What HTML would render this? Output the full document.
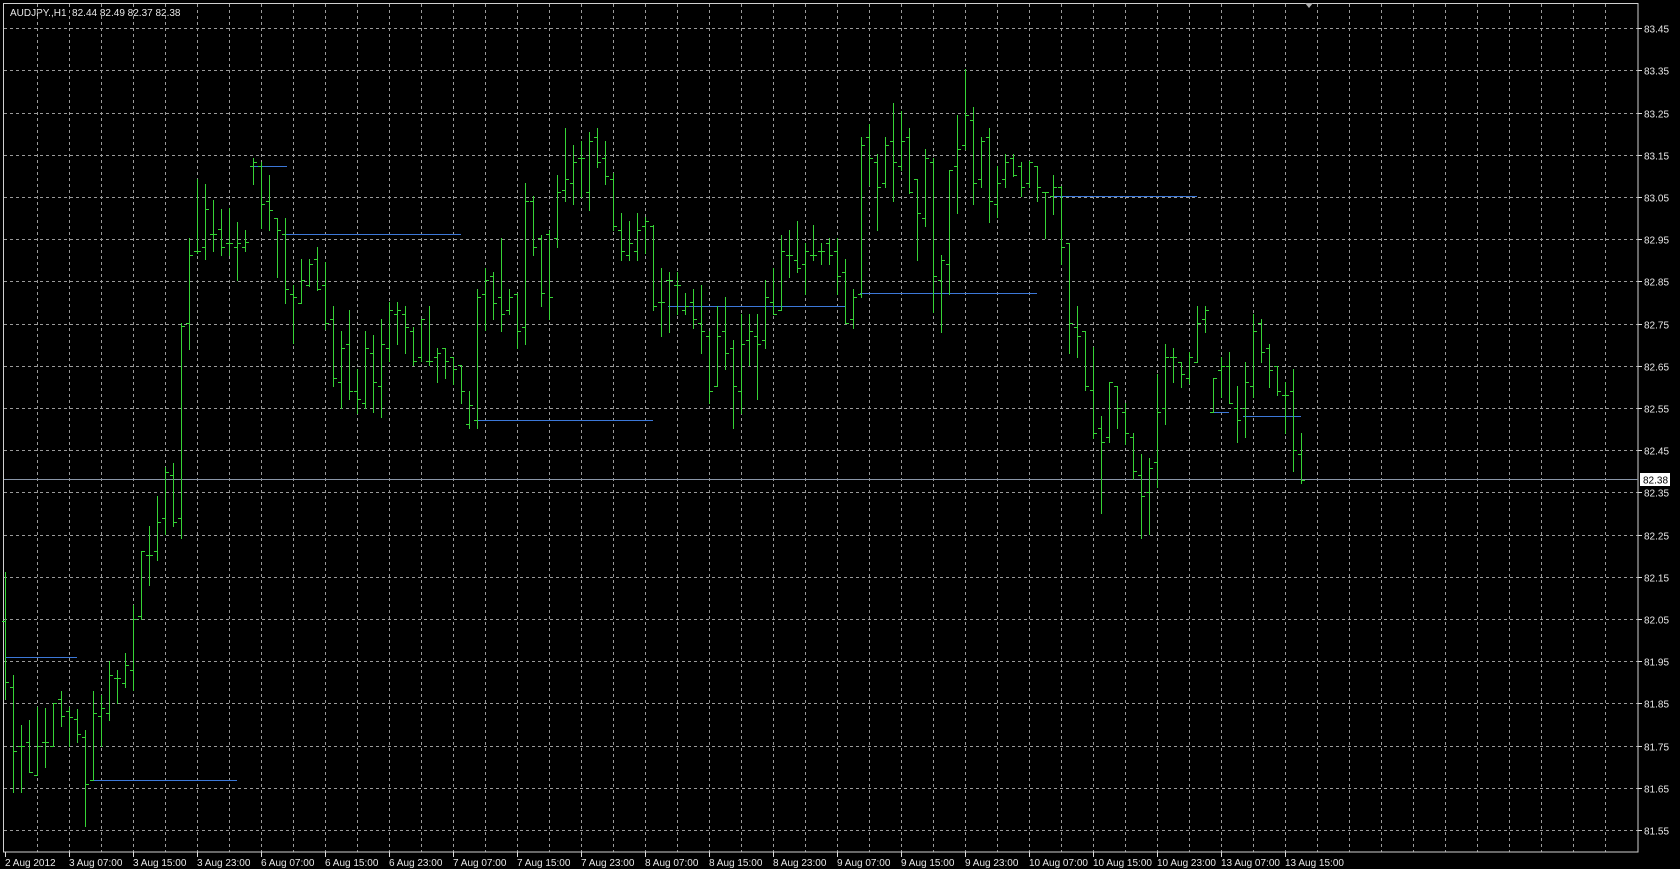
<!DOCTYPE html>
<html><head><meta charset="utf-8">
<style>
html,body{margin:0;padding:0;background:#000;width:1680px;height:869px;overflow:hidden}
svg{display:block}
text{font-family:"Liberation Sans",sans-serif;font-size:10px}
</style></head>
<body>
<svg id="c" width="1680" height="869" xmlns="http://www.w3.org/2000/svg">
<rect width="1680" height="869" fill="#000"/>
<text x="10" y="16" fill="#e8e8e8" font-size="10.5" xml:space="preserve">AUDJPY.,H1&#160;&#160;82.44 82.49 82.37 82.38</text>
</svg>
<script>
var s='';
for(var k=1;k<=50;k++){var x=5+32*k+0.5;s+='<line x1="'+x+'" y1="4" x2="'+x+'" y2="852" stroke="#9a9a9a" stroke-dasharray="3,3"/>';}
for(var k=0;k<=19;k++){var y=Math.round(492.3-42.2*(k-8))+0.5;var p=(81.55+0.1*k).toFixed(2);
 s+='<line x1="4" y1="'+y+'" x2="1638" y2="'+y+'" stroke="#9a9a9a" stroke-dasharray="3,3"/>';
 s+='<line x1="1638" y1="'+y+'" x2="1642" y2="'+y+'" stroke="#ddd"/>';
 s+='<text x="1644" y="'+(y+4)+'" fill="#e8e8e8" font-size="10.5">'+p+'</text>';}
s+='<rect x="3.5" y="3.5" width="1634.5" height="848.5" fill="none" stroke="#d0d0d0"/>';
s+='<polygon points="1305,3 1313,3 1309,8" fill="#b0b0b0"/>';
var tl=["2 Aug 2012","3 Aug 07:00","3 Aug 15:00","3 Aug 23:00","6 Aug 07:00","6 Aug 15:00","6 Aug 23:00","7 Aug 07:00","7 Aug 15:00","7 Aug 23:00","8 Aug 07:00","8 Aug 15:00","8 Aug 23:00","9 Aug 07:00","9 Aug 15:00","9 Aug 23:00","10 Aug 07:00","10 Aug 15:00","10 Aug 23:00","13 Aug 07:00","13 Aug 15:00"];
for(var i=0;i<tl.length;i++){var x=5+64*i;s+='<line x1="'+(x+0.5)+'" y1="852" x2="'+(x+0.5)+'" y2="857" stroke="#ddd"/><text x="'+(x)+'" y="866" fill="#e8e8e8">'+tl[i]+'</text>';}
s+='<line x1="4" y1="479.5" x2="1638" y2="479.5" stroke="#8a96a8"/>';
s+='<rect x="1640" y="473" width="30" height="13" fill="#fff"/><text x="1643" y="483.5" fill="#000" font-size="10.5">82.38</text>';
var bl=[[5,77,657],[92,237,780],[253,287,166],[283,461,234],[476,653,420],[668,845,306],[860,1037,293],[1053,1197,196],[1212,1229,412],[1243,1301,416]];
bl.forEach(function(b){s+='<line x1="'+b[0]+'" y1="'+(b[2]+0.5)+'" x2="'+b[1]+'" y2="'+(b[2]+0.5)+'" stroke="#3c78d8"/>';});
var ch=[
 {o:130,sc:2.24,d:[[990,1275,1100,1237],[1220,1482,1248,1390],[1333,1482,1380,1380],[1322,1437,1372,1437],[1292,1445,1445,1380],[1295,1428,1372,1372],[1284,1380,1380,1284],[1257,1335,1275,1312],[1292,1380,1302,1315],[1296,1372,1320,1352],[1345,1560,1360,1465],[1257,1456,1456,1305],[1265,1380,1312,1295],[1190,1322,1305,1220],[1210,1284,1228,1228],[1172,1247,1238,1198],[1065,1255,1210,1096],[943,1096,1088,943],[887,1020,953,953],[820,963,943,878],[755,906,868,765],[745,887,773,878],[432,915,868,440],[242,490,432,281],[110,275,270,270],[120,290,262,178],[157,272,232,232],[178,280,222,262],[175,280,252,252],[205,337,262,252],[225,272,262,250],[62,120,80,72],[72,220,80,165],[100,225,158,180]]},
 {o:40,sc:2.8,d:[[497,663,497,532],[497,735,543,698],[687,847,710,720],[614,735,735,673],[614,690,687,627],[580,700,613,697],[622,808,687,793],[745,970,782,946],[815,1029,958,862],[757,1006,852,982],[920,1045,982,1006],[815,1029,1017,862],[827,1042,875,958],[782,1055,970,852],[733,900,862,757],[733,852,768,757],[745,875,768,804],[804,911,815,900],[780,900,888,782],[745,911,900,900],[862,958,888,875],[862,946,862,900],[888,963,888,922],[911,1017,911,982],[982,1087,1075,1023],[698,1087,1065,720],[638,812,710,673],[650,782,660,735],[555,815,720,768],[697,768,757,720],[707,862,710,815],[400,852,804,450],[437,603,450,580]]},
 {o:40,sc:2.8,d:[[545,745,555,708],[533,782,543,720],[378,580,555,425],[245,450,420,390],[295,460,400,342],[283,440,330,330],[258,475,425,283],[245,355,272,342],[283,402,330,380],[372,533,390,520],[485,615,533,592],[507,615,603,567],[485,615,592,533],[495,595,520,508],[518,757,520,745],[638,828,733,733],[650,818,673,673],[650,768,687,687],[707,768,757,745],[697,805,733,782],[687,875,793,815],[815,1015,828,982],[745,970,970,828],[720,922,815,875],[840,1087,862,970],[768,1045,982,852],[768,911,840,815],[768,1006,828,852],[673,862,840,720],[638,768,733,768],[545,757,757,592],[533,663,603,603],[507,650,615,638],[567,712,627,592]]},
 {o:40,sc:2.8,d:[[518,615,603,603],[567,628,592,592],[555,628,567,603],[555,712,592,662],[614,793,650,793],[697,805,782,720],[272,720,710,295],[235,405,272,330],[320,533,342,412],[272,412,400,295],[177,450,283,342],[200,365,352,283],[245,428,272,425],[390,615,390,485],[305,520,497,330],[330,762,342,662],[603,817,673,615],[365,710,627,365],[210,485,353,305],[82,305,295,210],[187,460,225,400],[272,412,390,283],[245,510,272,450],[353,495,460,400],[320,412,390,342],[320,380,330,378],[342,438,353,412],[338,412,400,342],[353,450,353,412],[425,555,425,425],[378,487,438,412],[408,628,412,580],[567,875,567,793],[745,888,803,828]]},
 {o:240,sc:3,d:[[272,450,272,438],[320,595,450,580],[528,820,565,605],[427,605,592,427],[438,565,438,503],[490,612,517,580],[580,718,592,693],[642,895,705,768],[655,883,757,683],[402,740,667,517],[312,553,503,352],[325,427,352,352],[365,440,365,403],[337,428,415,352],[198,365,365,250],[198,275,238,210],[415,517,517,415],[352,470,390,377],[337,490,377,490],[438,605,503,540],[365,592,503,427],[222,470,438,272],[237,365,250,337],[312,440,325,390],[377,465,377,452],[427,580,465,465],[388,693,452,630],[580,730,643,719]]}
];
var idx=0,g='#36d336';
ch.forEach(function(c){c.d.forEach(function(b){
 var x=5+8*idx+0.5;var f=function(v){return Math.round(c.o+v/c.sc);};
 var h=f(b[0]),l=f(b[1]),o=f(b[2])+0.5,cl=f(b[3])+0.5;
 s+='<line x1="'+x+'" y1="'+h+'" x2="'+x+'" y2="'+(l+1)+'" stroke="'+g+'"/>';
 s+='<line x1="'+(x-3.5)+'" y1="'+o+'" x2="'+(x-0.5)+'" y2="'+o+'" stroke="'+g+'"/>';
 s+='<line x1="'+(x+0.5)+'" y1="'+cl+'" x2="'+(x+3.5)+'" y2="'+cl+'" stroke="'+g+'"/>';
 idx++;});});
document.getElementById('c').insertAdjacentHTML('beforeend',s);
</script>
</body></html>
